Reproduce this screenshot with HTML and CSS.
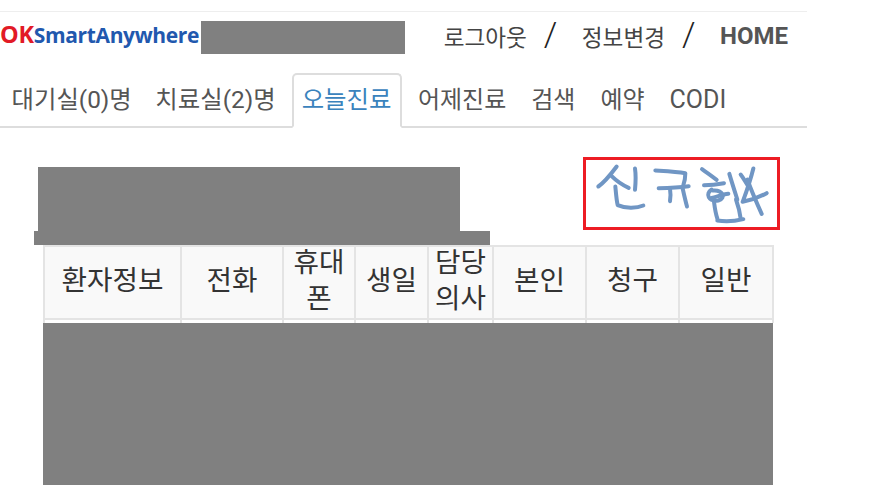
FILE: index.html
```html
<!DOCTYPE html>
<html lang="ko">
<head>
<meta charset="utf-8">
<title>OKSmartAnywhere</title>
<link rel="stylesheet" href="styles.css">
</head>
<body>
<div class="page">
  <header class="topbar">
    <div class="brand">
      <span class="logo"><span class="logo-ok">OK</span><span class="logo-name">SmartAnywhere</span></span>
      <div class="redact redact-name"></div>
    </div>
    <nav class="links">
      <a class="link">로그아웃</a>
      <span class="sep">/</span>
      <a class="link">정보변경</a>
      <span class="sep">/</span>
      <a class="link link-home">HOME</a>
    </nav>
  </header>
  <ul class="tabs">
    <li class="tab tab-count">대기실(0)명</li>
    <li class="tab tab-count">치료실(2)명</li>
    <li class="tab tab-active">오늘진료</li>
    <li class="tab">어제진료</li>
    <li class="tab">검색</li>
    <li class="tab">예약</li>
    <li class="tab tab-latin">CODI</li>
  </ul>
  <section class="head">
    <div class="head-left">
      <div class="redact redact-title"></div>
      <div class="redact redact-sub"></div>
    </div>
    <div class="newbox">
      <svg class="scribble" viewBox="48 48 573 198" width="191" height="66" aria-hidden="true">
        <g class="ink">
          <path d="M140 66 C122 90 105 112 85 126"/>
          <path d="M125 95 C140 110 158 122 176 130"/>
          <path d="M195 72 C198 92 197 115 195 136"/>
          <path d="M136 126 C138 145 139 165 143 182 C165 192 200 192 220 183"/>
          <path d="M256 78 C285 80 320 82 346 86 C346 98 344 110 340 122"/>
          <path d="M266 131 C295 130 330 128 356 125"/>
          <path d="M300 132 C302 145 302 158 300 170"/>
          <path d="M338 132 C342 150 346 168 351 186"/>
          <path d="M396 74 C410 84 425 95 440 106"/>
          <path d="M402 122 C420 122 440 120 462 116"/>
          <path d="M425 135 C405 148 415 172 445 168 C470 160 458 135 428 138"/>
          <path d="M425 160 C445 155 460 150 475 148"/>
          <path d="M432 172 C434 188 436 205 442 222"/>
          <path d="M442 228 C465 232 495 230 520 224"/>
          <path d="M478 88 C486 115 494 140 502 165"/>
          <path d="M512 90 C520 100 526 112 534 124"/>
          <path d="M550 72 C542 105 530 140 518 172 C540 168 568 158 590 146"/>
          <path d="M532 105 C545 140 560 175 575 208"/>
          <path d="M498 165 C505 185 510 205 512 222"/>
        </g>
      </svg>
    </div>
  </section>
  <table class="grid">
    <colgroup>
      <col class="c1"><col class="c2"><col class="c3"><col class="c4"><col class="c5"><col class="c6"><col class="c7"><col class="c8">
    </colgroup>
    <thead>
      <tr>
        <th><div class="th-label">환자정보</div></th>
        <th><div class="th-label">전화</div></th>
        <th><div class="th-label">휴대폰</div></th>
        <th><div class="th-label">생일</div></th>
        <th><div class="th-label">담당의사</div></th>
        <th><div class="th-label">본인</div></th>
        <th><div class="th-label">청구</div></th>
        <th><div class="th-label">일반</div></th>
      </tr>
    </thead>
    <tbody>
      <tr class="stub"><td></td><td></td><td></td><td></td><td></td><td></td><td></td><td></td></tr>
    </tbody>
  </table>
  <div class="redact redact-rows"></div>
</div>
</body>
</html>
```
FILE: styles.css
```css
* { box-sizing: border-box; }
html, body { margin: 0; padding: 0; background: #fff; }
body {
  font-family: Roboto, "Noto Sans CJK KR", "Noto Sans", sans-serif;
  color: #333;
  overflow: hidden;
}
.page { width: 807px; padding-top: 11px; }
.redact { background: #808080; }

.topbar {
  display: flex;
  align-items: flex-start;
  justify-content: space-between;
  height: 62px;
  border-top: 1px solid #eee;
  padding-right: 19px;
}
.brand { display: flex; align-items: flex-start; padding-top: 9px; }
.logo {
  width: 201px;
  height: 33px;
  line-height: 27px;
  font-family: "Open Sans", sans-serif;
  font-weight: 700;
  font-size: 21px;
  letter-spacing: -0.35px;
  white-space: nowrap;
}
.logo-ok { color: #e21a26; font-size: 23.5px; letter-spacing: -0.3px; }
.logo-name { color: #2158ae; }
.redact-name { width: 204px; height: 33px; }

.links { display: flex; align-items: center; height: 48px; color: #444; }
.link { font-size: 22.6px; font-weight: 400; }
.sep { font-size: 34px; font-weight: 300; margin: 0 24.5px 0 17px; color: #222; line-height: 1; position: relative; top: -2px; }
.link-home { font-size: 24px; font-weight: 700; color: #555; }

.tabs {
  display: flex;
  list-style: none;
  margin: 0;
  padding: 0;
  height: 55px;
  border-bottom: 2px solid #ddd;
}
.tab {
  padding: 9px 12.5px 0;
  margin-bottom: -2px;
  height: 55px;
  font-size: 24px;
  line-height: 36px;
  color: #555;
  white-space: nowrap;
}
.tab-count { font-size: 24.4px; padding-left: 11.5px; padding-right: 12px; }
.tab-latin { font-size: 25px; }
.tab-active {
  padding: 7px 9px 0 8px;
  margin: 0 3px 0 4px;
  font-size: 24.4px;
  color: #3a83bd;
  background: #fff;
  border: 2px solid #ddd;
  border-bottom-color: #fff;
  border-radius: 5px 5px 0 0;
}

.head { display: flex; height: 117px; padding: 29px 0 0 34px; }
.head-left { width: 456px; padding-top: 10px; }
.redact-title { width: 422px; height: 64px; margin-left: 4px; }
.redact-sub { width: 456px; height: 14px; }
.newbox {
  margin-left: 93px;
  width: 197px;
  height: 73px;
  border: 3px solid #ed1c24;
  background: #fff;
  display: flex;
}
.scribble { display: block; width: 191px; height: 67px; }
.ink { fill: none; stroke: #7096c4; stroke-width: 12; stroke-linecap: round; stroke-linejoin: round; }

.grid {
  margin-left: 43px;
  width: 729px;
  table-layout: fixed;
  border-collapse: collapse;
}
.c1 { width: 137px; }
.c2 { width: 102px; }
.c3 { width: 72px; }
.c4 { width: 73px; }
.c5 { width: 65px; }
.c6 { width: 93px; }
.c7 { width: 93px; }
.c8 { width: 94px; }
.grid th {
  height: 73px;
  padding: 0 4px 3px;
  background: #f9f9f9;
  border: 2px solid #e4e4e4;
  font-weight: 400;
  color: #333;
}
.th-label {
  display: flex;
  align-items: center;
  justify-content: center;
  height: 68px;
  font-size: 27.7px;
  line-height: 36px;
  text-align: center;
  word-break: break-all;
}
.grid td { height: 4px; padding: 0; border: 2px solid #e4e4e4; border-bottom: 0; }
.stub { height: 4px; }
.redact-rows { margin-left: 43px; width: 730px; height: 162px; }
```
